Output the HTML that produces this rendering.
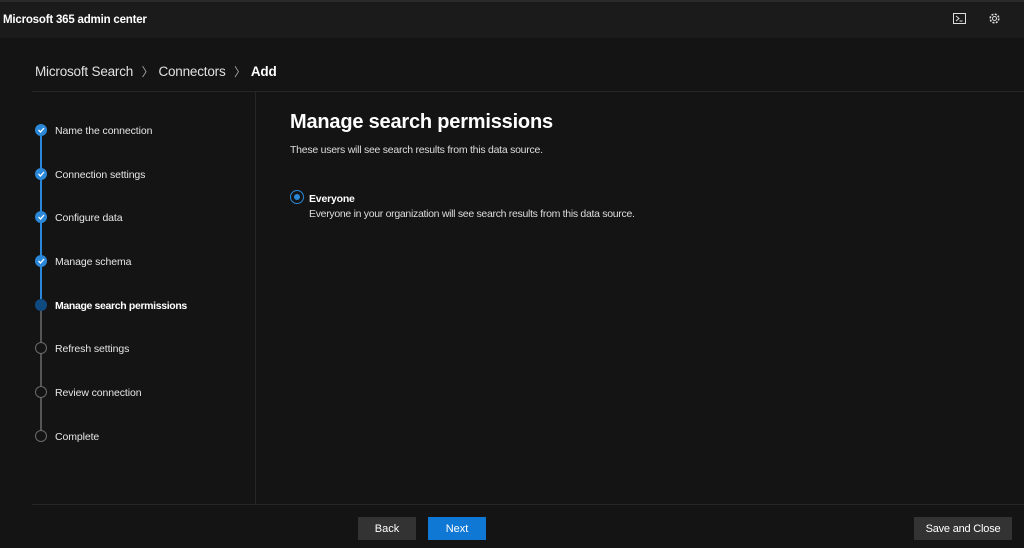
<!DOCTYPE html>
<html><head><style>
body{margin:0;width:1024px;height:548px;background:#141414;font-family:"Liberation Sans",sans-serif;color:#fff;position:relative;overflow:hidden}
.top{position:absolute;left:0;top:0;width:1024px;height:38px;background:#1b1b1b;border-top:2px solid #2a2a2a;box-sizing:border-box}
.a{position:absolute;white-space:nowrap}
.step{position:absolute;left:55px;font-size:10.5px;color:#e6e6e6;letter-spacing:-0.1px}
.c{position:absolute;left:35px;width:12px;height:12px;border-radius:50%;box-sizing:border-box}
.done{background:#2b88d8}
.todo{border:1.5px solid #6a6a6a}
.ln{position:absolute;left:40px;width:2px}
.btn{position:absolute;top:517px;height:23px;font-size:11px;display:flex;align-items:center;justify-content:center;color:#fff}
</style></head><body>
<div class="top"></div>
<div class="a" style="left:3px;top:14px;font-size:11.5px;font-weight:bold;letter-spacing:-0.2px">Microsoft 365 admin center</div>
<svg class="a" style="left:953px;top:13px" width="13" height="12"><rect x="0.5" y="0.5" width="12" height="10" fill="none" stroke="#ddd"/><path d="M3 3l3 2.5-3 2.5M6.5 8h3" stroke="#ddd" fill="none"/></svg>
<svg class="a" style="left:988px;top:12px" width="13" height="13" viewBox="0 0 13 13"><circle cx="6.5" cy="6.5" r="4.3" fill="none" stroke="#ddd" stroke-width="1.6" stroke-dasharray="2 1.4"/><circle cx="6.5" cy="6.5" r="2" fill="none" stroke="#ddd"/></svg>
<div class="a" style="left:35px;top:63px;font-size:13.5px;color:#e0e0e0;letter-spacing:-0.2px">Microsoft Search <span style="color:#aaa;font-size:12px;padding:0 5px">&#x3009;</span>Connectors <span style="color:#aaa;font-size:12px;padding:0 5px">&#x3009;</span><b style="color:#fff">Add</b></div>
<div class="a" style="left:32px;top:91px;width:992px;height:1px;background:#262626"></div>
<div class="a" style="left:255px;top:92px;width:1px;height:412px;background:#262626"></div>
<div class="a" style="left:32px;top:504px;width:992px;height:1px;background:#262626"></div>

<div class="ln" style="top:136px;height:163px;background:#2b88d8"></div>
<div class="ln" style="top:311px;height:125px;background:#555"></div>
<div class="c done" style="top:124px"></div><div class="c done" style="top:168px"></div><div class="c done" style="top:211px"></div><div class="c done" style="top:255px"></div>
<div class="c" style="top:299px;background:#0f4a80"></div>
<div class="c todo" style="top:342px;background:#141414"></div><div class="c todo" style="top:386px;background:#141414"></div><div class="c todo" style="top:430px;background:#141414"></div>
<svg class="a" style="left:35px;top:124px" width="12" height="150"><g stroke="#fff" stroke-width="1.3" fill="none"><path d="M3.5 6l2 2 3.5-4"/><path d="M3.5 50l2 2 3.5-4"/><path d="M3.5 93l2 2 3.5-4"/><path d="M3.5 137l2 2 3.5-4"/></g></svg>
<div class="step" style="top:125px">Name the connection</div>
<div class="step" style="top:169px">Connection settings</div>
<div class="step" style="top:212px">Configure data</div>
<div class="step" style="top:256px">Manage schema</div>
<div class="step" style="top:300px;font-weight:bold;color:#fff;letter-spacing:-0.35px">Manage search permissions</div>
<div class="step" style="top:343px">Refresh settings</div>
<div class="step" style="top:387px">Review connection</div>
<div class="step" style="top:431px">Complete</div>

<div class="a" style="left:290px;top:111px;font-size:20px;font-weight:bold;letter-spacing:-0.2px">Manage search permissions</div>
<div class="a" style="left:290px;top:144px;font-size:10.5px;color:#ddd;letter-spacing:-0.25px">These users will see search results from this data source.</div>
<div class="a" style="left:290px;top:190px;width:14px;height:14px;border-radius:50%;border:1.5px solid #2b88d8;box-sizing:border-box;background:#141414"></div>
<div class="a" style="left:294px;top:194px;width:6px;height:6px;border-radius:50%;background:#2b88d8"></div>
<div class="a" style="left:309px;top:193px;font-size:10.5px;font-weight:bold;letter-spacing:-0.2px">Everyone</div>
<div class="a" style="left:309px;top:208px;font-size:10.5px;color:#ddd;letter-spacing:-0.3px">Everyone in your organization will see search results from this data source.</div>

<div class="btn" style="left:358px;width:58px;background:#333">Back</div>
<div class="btn" style="left:428px;width:58px;background:#0f78d4">Next</div>
<div class="btn" style="left:914px;width:98px;background:#333;letter-spacing:-0.2px">Save and Close</div>
</body></html>
